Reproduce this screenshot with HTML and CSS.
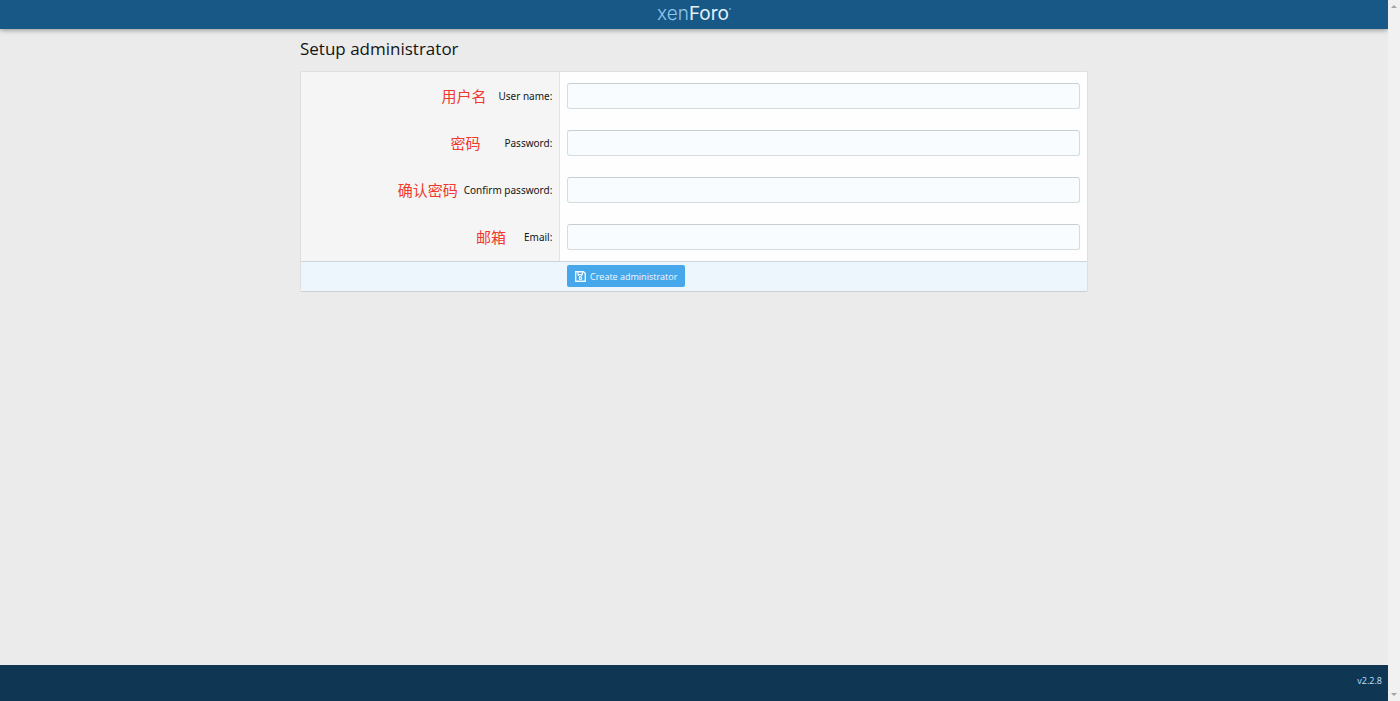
FILE: index.html
```html
<!DOCTYPE html>
<html lang="en">
<head>
<meta charset="utf-8">
<title>Setup administrator | XenForo</title>
<link rel="stylesheet" href="styles.css">
</head>
<body>
<div class="window">
  <div class="page">
    <header class="header">
      <a class="logo" href="#"><span class="logo-light">xen</span>Foro<span class="logo-dot"></span></a>
    </header>
    <main class="main">
      <h1 class="title">Setup administrator</h1>
      <form class="block">
        <div class="rows">
          <div class="row">
            <div class="label-cell"><span class="note note-user">用户名</span><label for="username">User name:</label></div>
            <div class="input-cell"><input class="input" id="username" type="text"></div>
          </div>
          <div class="row">
            <div class="label-cell"><span class="note note-password">密码</span><label for="password">Password:</label></div>
            <div class="input-cell"><input class="input" id="password" type="password"></div>
          </div>
          <div class="row">
            <div class="label-cell"><span class="note note-confirm">确认密码</span><label for="confirm">Confirm password:</label></div>
            <div class="input-cell"><input class="input" id="confirm" type="password"></div>
          </div>
          <div class="row">
            <div class="label-cell"><span class="note note-email">邮箱</span><label for="email">Email:</label></div>
            <div class="input-cell"><input class="input" id="email" type="email"></div>
          </div>
        </div>
        <div class="submit-row">
          <button class="button" type="submit">
            <svg class="icon" viewBox="0 0 11 11" fill="none" stroke="currentColor" aria-hidden="true">
              <path d="M.7.7h7.8l1.8 1.8v7.8H.7z" stroke-width="1.4"/>
              <path d="M3 1v2.6h4.4V1" stroke-width="1.1"/>
              <path d="M3 3.8l2 2.2 2.6-2.2" stroke-width=".9"/>
              <circle cx="5.5" cy="7.2" r="1.3" stroke-width="1.1"/>
            </svg>
            <span>Create administrator</span>
          </button>
        </div>
      </form>
    </main>
    <footer class="footer">v2.2.8</footer>
  </div>
  <div class="scrollbar" aria-hidden="true">
    <span class="arrow arrow-up"></span>
    <span class="arrow arrow-down"></span>
  </div>
</div>
</body>
</html>
```
FILE: styles.css
```css
* {
  box-sizing: border-box;
}

body {
  margin: 0;
  background: #ebebeb;
  color: #141414;
  font-family: "Noto Sans", "Noto Sans CJK SC", sans-serif;
  font-size: 10px;
  line-height: 16px;
}

.window {
  display: flex;
  min-height: 100vh;
}

.page {
  display: flex;
  flex: 1;
  flex-direction: column;
}

.header {
  display: flex;
  align-items: center;
  justify-content: center;
  height: 29px;
  padding-bottom: 2px;
  background: #185886;
  box-shadow: 0 1px 5px rgba(0, 0, 0, 0.4);
}

.logo {
  display: flex;
  color: #e4f1fa;
  font-family: Inter, sans-serif;
  font-size: 19px;
  font-weight: 400;
  line-height: 24px;
  text-decoration: none;
}

.logo-light {
  color: #8fc6ee;
  font-weight: 300;
}

.logo-dot {
  width: 2px;
  height: 2px;
  margin-top: 6px;
  border-radius: 1px;
  background: #6ba5cf;
}

.main {
  flex: 1;
  width: 100%;
  max-width: 788px;
  margin: 0 auto;
  padding-top: 8px;
}

.title {
  margin: 0 0 10px;
  font-family: "Open Sans", sans-serif;
  font-size: 17px;
  font-weight: 400;
  line-height: 24px;
}

.block {
  overflow: hidden;
  border: 1px solid #dfdfdf;
  border-bottom-color: #c8d0d5;
  border-radius: 2px;
  background: #fefefe;
}

.rows {
  border-bottom: 1px solid #cbd5da;
}

.row {
  display: flex;
}

.label-cell {
  display: flex;
  align-items: center;
  justify-content: flex-end;
  width: 33%;
  padding-right: 7px;
  border-right: 1px solid #e3e3e3;
  background: #f5f5f5;
}

.note {
  color: #f0382c;
  font-family: "Noto Sans CJK SC", sans-serif;
  font-size: 15px;
}

.note-user {
  margin-right: 12px;
}

.note-password {
  margin-right: 24px;
}

.note-confirm {
  margin-right: 6px;
}

.note-email {
  margin-right: 18px;
}

.input-cell {
  flex: 1;
  padding: 11px 7px 10px;
}

.row:last-child .input-cell {
  padding-bottom: 11px;
}

.input {
  display: block;
  width: 100%;
  height: 26px;
  padding: 4px;
  border: 1px solid #d5dcdf;
  border-top-color: #c8cfd2;
  border-radius: 3px;
  background: #f8fcff;
  font: inherit;
}

.submit-row {
  padding: 3px 0 4px 266px;
  background: #edf6fd;
}

.button {
  display: flex;
  align-items: center;
  gap: 4px;
  height: 22px;
  padding: 1px 8px 0;
  border: 0;
  border-radius: 2px;
  background: #47a7eb;
  color: #f0f8fe;
  font-family: "Open Sans", sans-serif;
  font-size: 9px;
}

.icon {
  width: 11px;
  height: 11px;
}

.footer {
  height: 36px;
  padding: 8px 6px;
  background: #0f3652;
  color: #b9dcf5;
  font-size: 9px;
  text-align: right;
}

.scrollbar {
  display: flex;
  flex-direction: column;
  align-items: center;
  justify-content: space-between;
  width: 12px;
  padding: 5px 0;
  background: #f1f1f1;
}

.arrow {
  border-right: 3px solid transparent;
  border-left: 3px solid transparent;
}

.arrow-up {
  border-bottom: 3px solid #a3a3a3;
}

.arrow-down {
  border-top: 3px solid #a3a3a3;
}
```
